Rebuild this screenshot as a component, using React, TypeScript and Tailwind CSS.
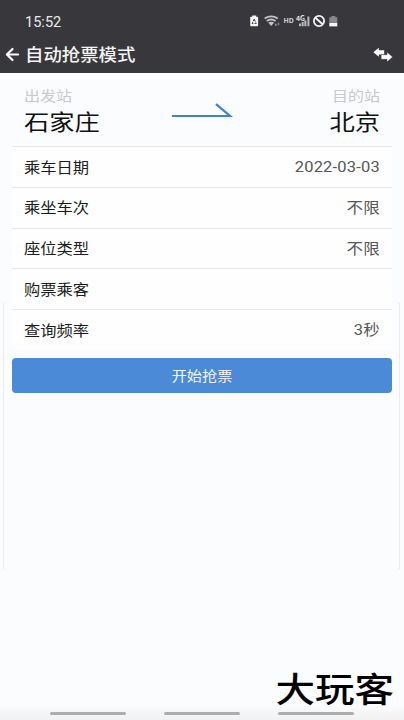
import { ArrowLeft } from 'lucide-react';

type Option = {
  label: string;
  value: string;
};

const options: Option[] = [
  { label: '乘车日期', value: '2022-03-03' },
  { label: '乘坐车次', value: '不限' },
  { label: '座位类型', value: '不限' },
  { label: '购票乘客', value: '' },
  { label: '查询频率', value: '3秒' },
];

function StatusIcons() {
  return (
    <svg width="92" height="14" viewBox="0 0 92 14" className="block">
      {/* battery saver */}
      <path d="M3.2 1.5h4v1.2h1.1q.8 0 .8.8v8q0 .8-.8.8H2q-.8 0-.8-.8v-8q0-.8.8-.8h1.2z" fill="#f4f4f4" />
      <path d="M5.2 5.2L7.3 9.4H3.1z" stroke="#38383c" strokeWidth="1" strokeDasharray="2.6 1.2" fill="none" />
      {/* wifi */}
      <g fill="none" stroke="#c4c4c6" strokeWidth="1.8">
        <path d="M15.6 4.6q6.6-4.4 13.2 0" />
        <path d="M17.8 7q4.4-3 8.8 0" />
      </g>
      <path d="M19.2 8.6q3-1.8 6 0L22.2 12z" fill="#c4c4c6" />
      <path d="M26 9.8h1.6v2.2H26zM28.8 8.8h1.4v2.4h-1.4z" fill="#8e8e92" />
      {/* signal */}
      <path d="M50 9.6h2v2.6h-2zM52.6 8h2.1v4.2h-2.1zM55.3 6.4h2.1v5.8h-2.1zM58.4 2.4h2v9.8h-2z" fill="#b8b8bb" />
      {/* muted */}
      <circle cx="70" cy="7" r="5.1" fill="none" stroke="#f4f4f4" strokeWidth="1.8" />
      <path d="M66.4 3.7l7.2 6.6" stroke="#f4f4f4" strokeWidth="1.9" />
      {/* battery */}
      <path d="M82.3 2h4v1.2h2V8h-8V3.2h2z" fill="#87878a" />
      <path d="M80.3 8.6h8v3.8h-8z" fill="#f6f6f6" />
      <text x="34.4" y="9.3" fill="#d2d2d4" fontSize="6.4" fontWeight="700" textLength="10.4" lengthAdjust="spacingAndGlyphs">HD</text>
      <text x="47" y="6.6" fill="#e0e0e2" fontSize="6.8" fontWeight="700" textLength="9" lengthAdjust="spacingAndGlyphs">4G</text>
    </svg>
  );
}

function SwapIcon() {
  return (
    <svg width="20" height="16" viewBox="0 0 20 16" fill="#fff">
      <path d="M.4 5.2L5.8.8v2.4h5.4v4.2H5.8v2.4z" />
      <path d="M19.6 10L14 5v2.7H8.1v4.6H14V15z" stroke="#38383c" strokeWidth=".5" />
    </svg>
  );
}

function Header() {
  return (
    <header className="h-[73px] bg-[#38383c] text-white">
      <div className="flex h-9 items-end justify-between pl-[25px] pr-[63px]">
        <span className="origin-left scale-x-[1.04] pb-[5px] font-[Roboto] text-[14px] leading-[18px] text-[#e9e9ea]">15:52</span>
        <div className="pb-2">
          <StatusIcons />
        </div>
      </div>
      <div className="flex h-[37px] items-center">
        <ArrowLeft className="ml-[3px] size-[19px]" strokeWidth={2.8} />
        <h1 className="ml-[3px] flex-1 scale-y-[.9] text-[18.4px] leading-[37px] font-medium text-[#f4f4f4]">自动抢票模式</h1>
        <div className="mr-[11px]">
          <SwapIcon />
        </div>
      </div>
    </header>
  );
}

function Station({ caption, name, end = false }: { caption: string; name: string; end?: boolean }) {
  return (
    <div className={end ? 'text-right' : 'text-left'}>
      <div className="scale-y-[.86] text-[16px] leading-[18px] text-[#c9c9cb]">{caption}</div>
      <div className="mt-[3px] scale-y-[.84] text-[25.3px] leading-[28px] text-[#111]">{name}</div>
    </div>
  );
}

function OptionRow({ label, value }: Option) {
  return (
    <div className="flex h-[40.75px] items-center justify-between border-t border-[#e8e8ea] bg-[#fefefe] px-3 text-[16.3px]">
      <span className="scale-y-[.88] text-[#1c1c1c]">{label}</span>
      <span className="scale-y-[.9] pt-[3px] font-[Roboto,'Noto_Sans_CJK_SC',sans-serif] text-[16.5px] leading-[24px] tracking-[0.2px] text-[#565658]">{value}</span>
    </div>
  );
}

function App() {
  return (
    <div className="relative flex h-[720px] w-[404px] flex-col overflow-hidden bg-[#fbfcfe] font-['Noto_Sans_CJK_SC',sans-serif]">
      <Header />

      <main className="flex-1 px-3">
        <section className="grid h-[73px] grid-cols-[148px_62px_1fr] px-3 pt-[13px]">
          <Station caption="出发站" name="石家庄" />
          <svg width="62" height="18" viewBox="0 0 62 18" className="mt-4" fill="none" stroke="#4181cd" strokeWidth="2.2">
            <path d="M0 14h58L44 2.2" />
          </svg>
          <Station caption="目的站" name="北京" end />
        </section>

        {options.map((option) => (
          <OptionRow key={option.label} label={option.label} value={option.value} />
        ))}

        <button className="mt-2 block h-[35px] w-full rounded-[4px] bg-[#4a8ad6] text-[15.2px] text-[#f2f7fd]">
          <span className="inline-block scale-y-[.87]">开始抢票</span>
        </button>
      </main>

      <footer className="flex h-[16px] justify-center gap-[38px] bg-linear-to-b from-[#fbfcfe] to-[#f1f1f1] pt-2">
        <span className="h-[3px] w-[76px] rounded-full bg-[#adadad]" />
        <span className="h-[3px] w-[76px] rounded-full bg-[#adadad]" />
        <span className="h-[3px] w-[76px] rounded-full bg-[#adadad]" />
      </footer>

      {/* frame edges beside the lower half of the form */}
      <div className="pointer-events-none absolute top-[303px] right-[4px] left-[3px] h-[266px] border-x border-[#ececee]" />

      <div className="absolute right-[10px] bottom-[9px] scale-y-[.86] text-[39.5px] leading-[48px] font-medium text-black">大玩客</div>
    </div>
  );
}

export default App;
